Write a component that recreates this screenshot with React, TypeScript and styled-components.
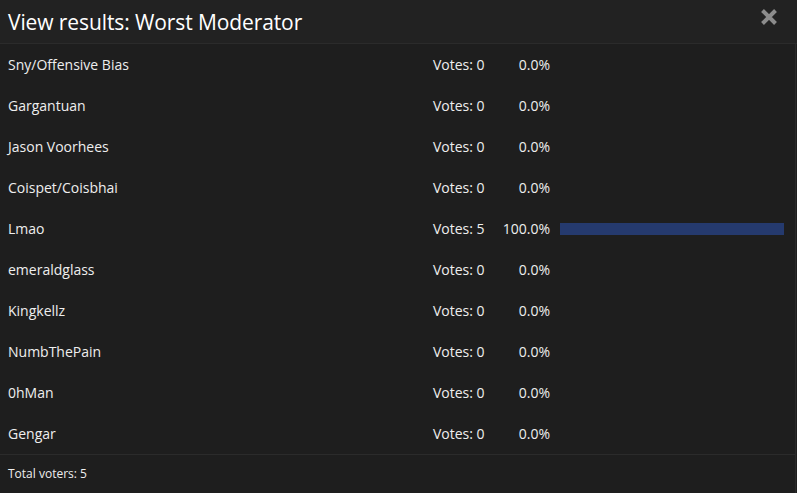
import styled, { createGlobalStyle } from "styled-components";

const GlobalStyle = createGlobalStyle`
    html, body {
        margin: 0;
        padding: 0;
        background: #1e1e1e;
    }
    body {
        font-family: "Open Sans", "Noto Sans", sans-serif;
        color: #eeeeee;
    }
`;

interface IOption {
    name: string;
    votes: number;
}

const options: IOption[] = [
    { name: "Sny/Offensive Bias", votes: 0 },
    { name: "Gargantuan", votes: 0 },
    { name: "Jason Voorhees", votes: 0 },
    { name: "Coispet/Coisbhai", votes: 0 },
    { name: "Lmao", votes: 5 },
    { name: "emeraldglass", votes: 0 },
    { name: "Kingkellz", votes: 0 },
    { name: "NumbThePain", votes: 0 },
    { name: "0hMan", votes: 0 },
    { name: "Gengar", votes: 0 },
];

const App = () => {
    const total = options.reduce((sum, o) => sum + o.votes, 0);
    return <Dialog>
        <GlobalStyle />
        <Header>
            <Title>View results: Worst Moderator</Title>
            <CloseBtn aria-label="Close">
                <svg width="18" height="18" viewBox="0 0 18 18">
                    <path d="M2.5 2.5 L15.5 15.5 M15.5 2.5 L2.5 15.5" stroke="#8c8c8c" strokeWidth="4" strokeLinecap="butt" />
                </svg>
            </CloseBtn>
        </Header>
        <Body>
            {options.map(o => {
                const pct = total ? (o.votes / total) * 100 : 0;
                return <Row key={o.name}>
                    <Name>{o.name}</Name>
                    <Votes>Votes: {o.votes}</Votes>
                    <Percent>{pct.toFixed(1)}%</Percent>
                    <BarTrack>
                        {pct > 0 && <Bar style={{ width: pct + "%" }} />}
                    </BarTrack>
                </Row>;
            })}
        </Body>
        <Footer>Total voters: {total}</Footer>
    </Dialog>;
};

const Dialog = styled.div`
    width: 797px;
    height: 493px;
    display: flex;
    flex-direction: column;
    background: #1e1e1e;
    overflow: hidden;
`;
const Header = styled.div`
    height: 43px;
    background: #222222;
    border-bottom: 1px solid #2b2b2b;
    display: flex;
    align-items: center;
    justify-content: space-between;
    padding: 0 19px 0 8px;
`;
const Title = styled.h1`
    margin: 0;
    font-size: 21px;
    font-weight: 400;
    color: #ffffff;
    letter-spacing: -0.1px;
`;
const CloseBtn = styled.span`
    display: flex;
    margin-top: -9px;
    cursor: pointer;
`;
const Body = styled.div`
    display: flex;
    flex-direction: column;
    border-right: 1px solid #2a2a2a;
    margin-right: 1px;
`;
const Row = styled.div`
    height: 41px;
    display: grid;
    grid-template-columns: 425px 62px 55px 1fr;
    align-items: center;
    padding: 0 11px 0 8px;
    font-size: 14px;
`;
const Name = styled.span`
    white-space: nowrap;
`;
const Votes = styled.span`
    white-space: nowrap;
`;
const Percent = styled.span`
    text-align: right;
    white-space: nowrap;
`;
const BarTrack = styled.div`
    height: 12px;
    margin-left: 10px;
    display: flex;
`;
const Bar = styled.div`
    height: 100%;
    background: #253a6e;
`;
const Footer = styled.div`
    flex: 1;
    border-top: 1px solid #2b2b2b;
    border-right: 1px solid #2a2a2a;
    margin-right: 1px;
    display: flex;
    align-items: center;
    padding: 0 8px 2px;
    font-size: 12px;
`;

export default App;
